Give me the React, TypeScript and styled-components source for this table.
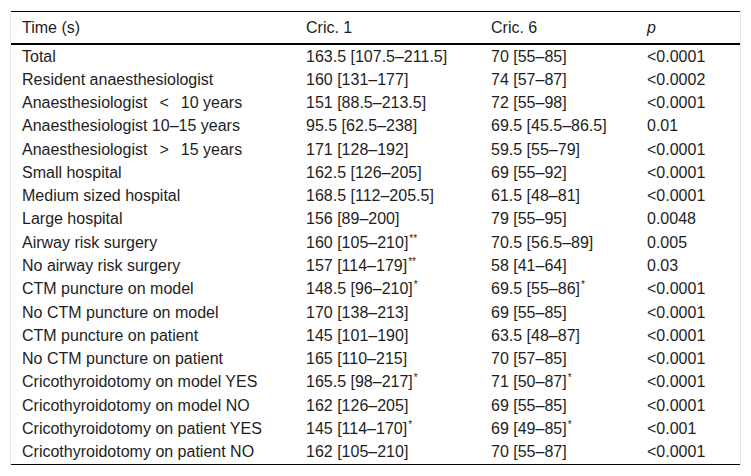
import styled, { createGlobalStyle } from "styled-components";

const GlobalStyle = createGlobalStyle`
  body {
    margin: 0;
    background: #fff;
    font-family: "Liberation Sans", Arial, sans-serif;
    color: #1e1e1e;
  }
`;

const Frame = styled.div`
  margin: 11px 0 0 10px;
  width: 729px;
  border-left: 1px solid #e6e6e6;
  border-right: 1px solid #e6e6e6;
`;

const Table = styled.div`
  border-top: 1px solid #000;
  border-bottom: 1px solid #000;
`;

const Row = styled.div<{ $head?: boolean }>`
  display: grid;
  grid-template-columns: 284px 185px 156px 1fr;
  align-items: center;
  height: ${(p) => (p.$head ? "31px" : "23.28px")};
  border-bottom: ${(p) => (p.$head ? "2px solid #000" : "none")};
  font-size: 16px;
  line-height: 18px;
`;

const Cell = styled.div<{ $italic?: boolean }>`
  padding-left: 11px;
  white-space: nowrap;
  font-style: ${(p) => (p.$italic ? "italic" : "normal")};
`;

const Sup = styled.sup`
  font-size: 10px;
  line-height: 0;
  margin-left: 1px;
  vertical-align: 6px;
`;

const Gap = styled.span`
  display: inline-block;
  width: 12px;
`;

type Value = { v: string; sup?: string };
type Line = { label: React.ReactNode; c1: Value; c6: Value; p: string };

const compare = (sign: string, rest: string) => (
  <>
    Anaesthesiologist<Gap />{sign}<Gap />{rest}
  </>
);

const rows: Line[] = [
  { label: "Total", c1: { v: "163.5 [107.5–211.5]" }, c6: { v: "70 [55–85]" }, p: "<0.0001" },
  { label: "Resident anaesthesiologist", c1: { v: "160 [131–177]" }, c6: { v: "74 [57–87]" }, p: "<0.0002" },
  { label: compare("<", "10 years"), c1: { v: "151 [88.5–213.5]" }, c6: { v: "72 [55–98]" }, p: "<0.0001" },
  { label: "Anaesthesiologist 10–15 years", c1: { v: "95.5 [62.5–238]" }, c6: { v: "69.5 [45.5–86.5]" }, p: "0.01" },
  { label: compare(">", "15 years"), c1: { v: "171 [128–192]" }, c6: { v: "59.5 [55–79]" }, p: "<0.0001" },
  { label: "Small hospital", c1: { v: "162.5 [126–205]" }, c6: { v: "69 [55–92]" }, p: "<0.0001" },
  { label: "Medium sized hospital", c1: { v: "168.5 [112–205.5]" }, c6: { v: "61.5 [48–81]" }, p: "<0.0001" },
  { label: "Large hospital", c1: { v: "156 [89–200]" }, c6: { v: "79 [55–95]" }, p: "0.0048" },
  { label: "Airway risk surgery", c1: { v: "160 [105–210]", sup: "**" }, c6: { v: "70.5 [56.5–89]" }, p: "0.005" },
  { label: "No airway risk surgery", c1: { v: "157 [114–179]", sup: "**" }, c6: { v: "58 [41–64]" }, p: "0.03" },
  { label: "CTM puncture on model", c1: { v: "148.5 [96–210]", sup: "*" }, c6: { v: "69.5 [55–86]", sup: "*" }, p: "<0.0001" },
  { label: "No CTM puncture on model", c1: { v: "170 [138–213]" }, c6: { v: "69 [55–85]" }, p: "<0.0001" },
  { label: "CTM puncture on patient", c1: { v: "145 [101–190]" }, c6: { v: "63.5 [48–87]" }, p: "<0.0001" },
  { label: "No CTM puncture on patient", c1: { v: "165 [110–215]" }, c6: { v: "70 [57–85]" }, p: "<0.0001" },
  { label: "Cricothyroidotomy on model YES", c1: { v: "165.5 [98–217]", sup: "*" }, c6: { v: "71 [50–87]", sup: "*" }, p: "<0.0001" },
  { label: "Cricothyroidotomy on model NO", c1: { v: "162 [126–205]" }, c6: { v: "69 [55–85]" }, p: "<0.0001" },
  { label: "Cricothyroidotomy on patient YES", c1: { v: "145 [114–170]", sup: "*" }, c6: { v: "69 [49–85]", sup: "*" }, p: "<0.001" },
  { label: "Cricothyroidotomy on patient NO", c1: { v: "162 [105–210]" }, c6: { v: "70 [55–87]" }, p: "<0.0001" },
];

const ValueCell = ({ value }: { value: Value }) => (
  <Cell>
    {value.v}
    {value.sup && <Sup>{value.sup}</Sup>}
  </Cell>
);

export default function App() {
  return (
    <>
      <GlobalStyle />
      <Frame>
        <Table>
          <Row $head>
            <Cell>Time (s)</Cell>
            <Cell>Cric. 1</Cell>
            <Cell>Cric. 6</Cell>
            <Cell $italic>p</Cell>
          </Row>
          {rows.map((r, i) => (
            <Row key={i}>
              <Cell>{r.label}</Cell>
              <ValueCell value={r.c1} />
              <ValueCell value={r.c6} />
              <Cell>{r.p}</Cell>
            </Row>
          ))}
        </Table>
      </Frame>
    </>
  );
}
